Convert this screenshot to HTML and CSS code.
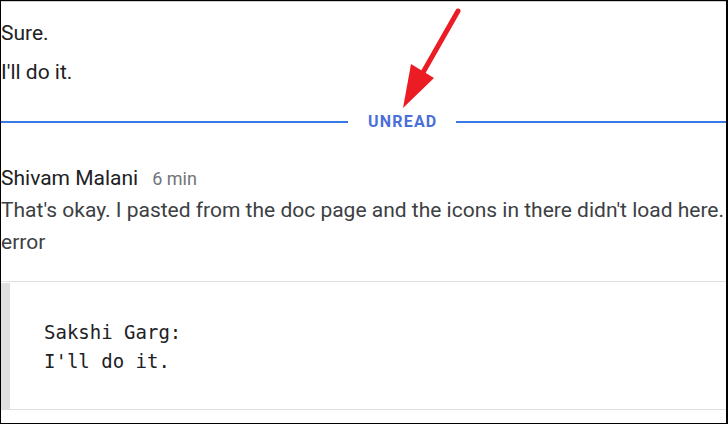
FILE: index.html
```html
<!DOCTYPE html>
<html lang="en">

<head>
    <meta charset="UTF-8">
    <meta name="viewport" content="width=device-width, initial-scale=1.0">
    <title>Chat</title>
    <link rel="stylesheet" href="styles.css">
</head>

<body>

    <div class="frame">
        <div class="message">
            <p class="line first">Sure.</p>
            <p class="line">I'll do it.</p>
        </div>

        <div class="divider">
            <span class="divider-line left"></span>
            <span class="divider-text">UNREAD</span>
            <span class="divider-line"></span>
        </div>

        <div class="message">
            <div class="header">
                <span class="name">Shivam Malani</span>
                <span class="time">6 min</span>
            </div>
            <p class="body">That's okay. I pasted from the doc page and the icons in there didn't load here. error</p>
        </div>

        <div class="quote">
            <pre>Sakshi Garg:
I'll do it.</pre>
        </div>

        <!-- annotation arrow -->
        <svg class="arrow" width="80" height="110" viewBox="0 0 80 110">
            <line x1="57" y1="10" x2="16" y2="82" stroke="#ec1c24" stroke-width="5" stroke-linecap="round" />
            <polygon points="2,107 10,63 33,77" fill="#ec1c24" />
        </svg>
    </div>

</body>

</html>
```

FILE: styles.css
```css
/* General Styles */
body {
    margin: 0;
    font-family: 'Roboto', sans-serif;
    background-color: #ffffff;
    color: #202124;
}

.frame {
    position: relative;
    box-sizing: border-box;
    width: 728px;
    height: 424px;
    overflow: hidden;
    border-top: 1px solid #000000;
    border-left: 1px solid #000000;
    border-right: 2px solid #000000;
    border-bottom: 1px solid #000000;
    box-shadow: inset 0 1px 0 #d0d0d0;
}

.message {
    padding: 0;
}

.line {
    margin: 0;
    font-size: 21px;
    line-height: 39px;
}

.line.first {
    margin-top: 13px;
}

/* Unread divider */
.divider {
    display: flex;
    align-items: center;
    margin-top: 19px;
    height: 21px;
}

.divider-line {
    flex: 1;
    height: 2px;
    background-color: #3b78e7;
}

.divider-line.left {
    flex: none;
    width: 347px;
}

.divider-text {
    padding: 0 19px 0 20px;
    font-size: 16px;
    font-weight: 700;
    letter-spacing: 1.2px;
    color: #4a6fd8;
}

.header {
    display: flex;
    align-items: baseline;
    gap: 14px;
    margin-top: 34px;
}

.name {
    font-size: 21px;
    color: #202124;
}

.time {
    font-size: 18px;
    color: #70757a;
}

.body {
    margin: 4px 0 0;
    font-size: 21px;
    line-height: 32px;
    color: #3c4043;
}

/* Quoted block */
.quote {
    margin-top: 23px;
    border-top: 1px solid #e0e0e0;
    border-bottom: 1px solid #e0e0e0;
    padding: 1px 0 0 0;
}

.quote pre {
    margin: 0;
    border-left: 9px solid #e0e0e0;
    padding: 35px 0 33px 34px;
    font-family: 'DejaVu Sans Mono', monospace;
    font-size: 19px;
    line-height: 29px;
    color: #202124;
}

.arrow {
    position: absolute;
    left: 400px;
    top: 0;
}
```
